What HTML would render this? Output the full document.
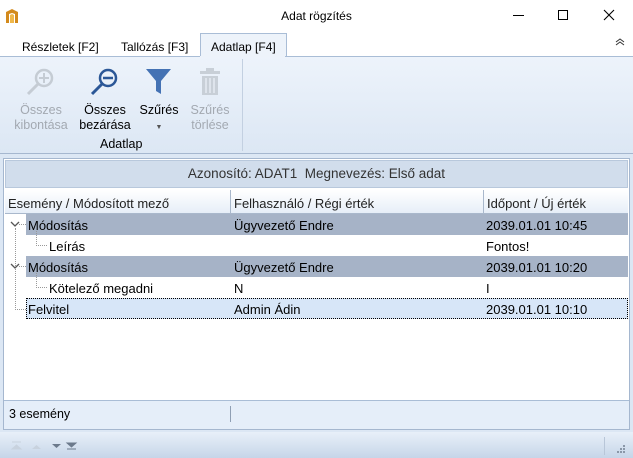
<!DOCTYPE html>
<html><head><meta charset="utf-8"><style>
*{margin:0;padding:0;box-sizing:border-box}
body{width:633px;height:458px;overflow:hidden;background:#fff;font-family:"Liberation Sans",sans-serif;font-size:12px;color:#000;position:relative}
.abs{position:absolute}
.t{position:absolute;white-space:nowrap}
</style></head><body>
<div class="abs" style="left:0;top:0;width:633px;height:32px;background:#fff"></div>
<svg class="abs" style="left:5px;top:8px" width="14" height="16" viewBox="0 0 14 16"><path d="M1 4 L7 1 L13 4 L13 15 L10 15 L10 6 L7 5 L4 6 L4 15 L1 15Z" fill="#d38a1c"/><path d="M5 7 L7 6 L9 7 L9 15 L5 15Z" fill="#f0b84a"/></svg>
<div class="t" style="left:0;width:633px;text-align:center;top:9px;font-size:12px">Adat rögzítés</div>
<div class="abs" style="left:513px;top:15px;width:11px;height:1px;background:#000"></div>
<div class="abs" style="left:558px;top:10px;width:10px;height:10px;border:1px solid #000"></div>
<svg class="abs" style="left:603px;top:9px" width="12" height="12"><path d="M1 1L11 11M11 1L1 11" stroke="#000" stroke-width="1.1"/></svg>
<div class="t" style="left:22px;top:40px;font-size:12px">Részletek [F2]</div>
<div class="t" style="left:121px;top:40px;font-size:12px">Tallózás [F3]</div>
<div class="abs" style="left:200px;top:33px;width:87px;height:24px;background:#edf3fa;border:1px solid #a9bdd6;border-bottom:none"></div>
<div class="t" style="left:211px;top:40px;font-size:12px">Adatlap [F4]</div>
<svg class="abs" style="left:615px;top:38px" width="10" height="8"><path d="M1 4L5 1L9 4M1 7L5 4L9 7" fill="none" stroke="#333" stroke-width="1"/></svg>
<div class="abs" style="left:0;top:56px;width:633px;height:98px;background:linear-gradient(#edf3fb,#dce7f4);border-top:1px solid #a9bdd6;border-bottom:1px solid #a5b7cf"></div>
<div class="abs" style="left:200px;top:56px;width:85px;height:1px;background:#edf3fa"></div>
<div class="abs" style="left:242px;top:59px;width:1px;height:92px;background:#c3d0e1"></div>
<svg class="abs" style="left:25px;top:66px" width="30" height="30"><circle cx="19" cy="12" r="8" fill="none" stroke="#c5ccd4" stroke-width="2.5"/><path d="M19 7v10M14 12h10" stroke="#c5ccd4" stroke-width="2"/><path d="M13 18L3 28" stroke="#c5ccd4" stroke-width="3"/></svg>
<svg class="abs" style="left:88px;top:66px" width="30" height="30"><circle cx="20" cy="12" r="8" fill="none" stroke="#2b5797" stroke-width="2.5"/><path d="M15 12h10" stroke="#2b5797" stroke-width="2.5"/><path d="M14 18L4 28" stroke="#2b5797" stroke-width="3"/></svg>
<svg class="abs" style="left:146px;top:69px" width="26" height="26"><path d="M0 0H25L15 12V25L10 22V12Z" fill="#4472b4"/></svg>
<svg class="abs" style="left:198px;top:68px" width="24" height="28"><rect x="2" y="3" width="20" height="3" fill="#c8cfd7"/><rect x="8" y="0" width="8" height="3" fill="#c8cfd7"/><rect x="4" y="8" width="16" height="19" fill="#c8cfd7"/><path d="M8 10v15M12 10v15M16 10v15" stroke="#e6ecf3" stroke-width="1.5"/></svg>
<div class="t" style="left:12px;top:103px;color:#a3a9b1;text-align:center;width:58px;line-height:15px;font-size:12.5px">Összes<br>kibontása</div>
<div class="t" style="left:76px;top:103px;text-align:center;width:58px;line-height:15px;font-size:12.5px">Összes<br>bezárása</div>
<div class="t" style="left:138px;top:103px;text-align:center;width:42px;line-height:15px;font-size:12.5px">Szűrés<br><span style="font-size:7px;color:#555">▼</span></div>
<div class="t" style="left:186px;top:103px;color:#a3a9b1;text-align:center;width:48px;line-height:15px;font-size:12.5px">Szűrés<br>törlése</div>
<div class="t" style="left:100px;top:137px;font-size:12.5px">Adatlap</div>
<div class="abs" style="left:0;top:154px;width:633px;height:278px;background:#dce7f4"></div>
<div class="abs" style="left:3px;top:158px;width:627px;height:272px;border:1px solid #a5b7cf;background:#fff"></div>
<div class="abs" style="left:5px;top:160px;width:623px;height:28px;background:#d1ddec;border:1px solid #b8c8dc"></div>
<div class="t" style="left:0;width:633px;text-align:center;top:166px;color:#333;font-size:13.5px">Azonosító: ADAT1&nbsp; Megnevezés: Első adat</div>
<div class="abs" style="left:5px;top:190px;width:623px;height:24px;background:linear-gradient(#fff,#e6eef8);border-bottom:1px solid #a9b8cc"></div>
<div class="abs" style="left:230px;top:190px;width:1px;height:24px;background:#a9b8cc"></div>
<div class="abs" style="left:483px;top:190px;width:1px;height:24px;background:#a9b8cc"></div>
<div class="t" style="left:8px;top:196px;color:#222;font-size:13px">Esemény / Módosított mező</div>
<div class="t" style="left:234px;top:196px;color:#222;font-size:13px">Felhasználó / Régi érték</div>
<div class="t" style="left:487px;top:196px;color:#222;font-size:13px">Időpont / Új érték</div>
<div class="abs" style="left:26px;top:214px;width:602px;height:21px;background:#a6b3c7"></div>
<div class="abs" style="left:26px;top:256px;width:602px;height:21px;background:#a6b3c7"></div>
<div class="abs" style="left:26px;top:298px;width:602px;height:21px;background:#d7e6f8;border:1px dotted #000"></div>
<div class="abs" style="left:15px;top:228px;width:0;height:82px;border-left:1px dotted #999"></div>
<div class="abs" style="left:15px;top:309px;width:11px;border-top:1px dotted #999"></div>
<div class="abs" style="left:36px;top:231px;width:0;height:15px;border-left:1px dotted #999"></div>
<div class="abs" style="left:36px;top:245px;width:11px;border-top:1px dotted #999"></div>
<div class="abs" style="left:36px;top:273px;width:0;height:15px;border-left:1px dotted #999"></div>
<div class="abs" style="left:36px;top:287px;width:11px;border-top:1px dotted #999"></div>
<div class="abs" style="left:19px;top:224px;width:7px;border-top:1px dotted #999"></div>
<div class="abs" style="left:19px;top:266px;width:7px;border-top:1px dotted #999"></div>
<svg class="abs" style="left:10px;top:221px" width="10" height="7"><path d="M1 1L5 5L9 1" fill="none" stroke="#555" stroke-width="1.3"/></svg>
<svg class="abs" style="left:10px;top:263px" width="10" height="7"><path d="M1 1L5 5L9 1" fill="none" stroke="#555" stroke-width="1.3"/></svg>
<div class="t" style="left:28px;top:218px;font-size:13px">Módosítás</div>
<div class="t" style="left:234px;top:218px;font-size:13px">Ügyvezető Endre</div>
<div class="t" style="left:486px;top:218px;font-size:13px">2039.01.01 10:45</div>
<div class="t" style="left:49px;top:239px;font-size:13px">Leírás</div>
<div class="t" style="left:486px;top:239px;font-size:13px">Fontos!</div>
<div class="t" style="left:28px;top:260px;font-size:13px">Módosítás</div>
<div class="t" style="left:234px;top:260px;font-size:13px">Ügyvezető Endre</div>
<div class="t" style="left:486px;top:260px;font-size:13px">2039.01.01 10:20</div>
<div class="t" style="left:49px;top:281px;font-size:13px">Kötelező megadni</div>
<div class="t" style="left:234px;top:281px;font-size:13px">N</div>
<div class="t" style="left:486px;top:281px;font-size:13px">I</div>
<div class="t" style="left:28px;top:302px;font-size:13px">Felvitel</div>
<div class="t" style="left:234px;top:302px;font-size:13px">Admin Ádin</div>
<div class="t" style="left:486px;top:302px;font-size:13px">2039.01.01 10:10</div>
<div class="abs" style="left:4px;top:400px;width:625px;height:29px;background:#e5eef9;border-top:1px solid #a9bdd6"></div>
<div class="t" style="left:9px;top:407px;font-size:12.5px">3 esemény</div>
<div class="abs" style="left:230px;top:406px;width:1px;height:16px;background:#8f9fb4"></div>
<div class="abs" style="left:0;top:432px;width:633px;height:26px;background:linear-gradient(#e8f0f9,#c6d5e8)"></div>
<svg class="abs" style="left:8px;top:440px" width="80" height="12"><path d="M4 2h9M4 9L8.5 5L13 9Z" fill="#c8d2de" stroke="#c8d2de"/><path d="M24 9L28.5 5L33 9Z" fill="#c8d2de"/><path d="M44 4L48.5 8L53 4Z" fill="#6c7a8c"/><path d="M59 3L63.5 7L68 3Z M59 9h9" fill="#6c7a8c" stroke="#6c7a8c"/></svg>
<div class="abs" style="left:604px;top:437px;width:1px;height:18px;background:#b8c6d8"></div>
<svg class="abs" style="left:616px;top:444px" width="10" height="10"><g fill="#8a97a8"><rect x="7" y="1" width="2" height="2"/><rect x="4" y="4" width="2" height="2"/><rect x="7" y="4" width="2" height="2"/><rect x="1" y="7" width="2" height="2"/><rect x="4" y="7" width="2" height="2"/><rect x="7" y="7" width="2" height="2"/></g></svg>
</body></html>
